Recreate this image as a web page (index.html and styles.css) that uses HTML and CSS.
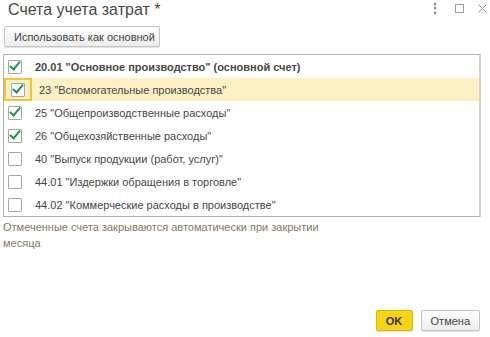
FILE: index.html
```html
<!DOCTYPE html>
<html lang="ru">
  <head>
    <meta charset="UTF-8" />
    <title>Счета учета затрат</title>
    <link rel="stylesheet" href="styles.css">
  </head>
  <body>
    <div class="window">
      <div class="header">
        <h1>Счета учета затрат *</h1>
        <div class="controls">
          <span class="more">&#8942;</span>
          <span class="maximize"></span>
          <svg class="close" width="9" height="9" viewBox="0 0 9 9"><path d="M0.5 0.5L8.5 8.5M8.5 0.5L0.5 8.5" stroke="#9a9a9a" stroke-width="1" fill="none"/></svg>
        </div>
      </div>

      <button class="btn">Использовать как основной</button>

      <div class="list">
        <div class="row">
          <span class="cb checked"></span>
          <span class="text bold">20.01 "Основное производство" (основной счет)</span>
        </div>
        <div class="row current">
          <span class="cb-focus"><span class="cb checked"></span></span>
          <span class="text">23 "Вспомогательные производства"</span>
        </div>
        <div class="row">
          <span class="cb checked"></span>
          <span class="text">25 "Общепроизводственные расходы"</span>
        </div>
        <div class="row">
          <span class="cb checked"></span>
          <span class="text">26 "Общехозяйственные расходы"</span>
        </div>
        <div class="row">
          <span class="cb"></span>
          <span class="text">40 "Выпуск продукции (работ, услуг)"</span>
        </div>
        <div class="row">
          <span class="cb"></span>
          <span class="text">44.01 "Издержки обращения в торговле"</span>
        </div>
        <div class="row">
          <span class="cb"></span>
          <span class="text">44.02 "Коммерческие расходы в производстве"</span>
        </div>
      </div>

      <p class="note">Отмеченные счета закрываются автоматически при закрытии месяца</p>

      <div class="footer">
        <button class="btn ok">OK</button>
        <button class="btn">Отмена</button>
      </div>
    </div>
  </body>
</html>
```

FILE: styles.css
```css
body {
  margin: 0;
  background-color: #fff;
  font-family: "Liberation Sans", Arial, sans-serif;
  color: #4d4d4d;
}
.window {
  width: 490px;
  height: 337px;
  box-sizing: border-box;
  padding: 0 10px 6px 3px;
  display: flex;
  flex-direction: column;
}
.header {
  display: flex;
  justify-content: space-between;
  align-items: flex-start;
  height: 26px;
}
h1 {
  margin: 0;
  padding: 1px 0 0 5px;
  font-size: 16px;
  font-weight: normal;
  color: #4a4a4a;
}
.controls {
  display: flex;
  align-items: center;
  gap: 14px;
  margin: 4px -7px 0 0;
}
.more {
  font-size: 12px;
  line-height: 9px;
  color: #777;
  font-weight: bold;
}
.maximize {
  width: 7px;
  height: 7px;
  border: 1px solid #9a9a9a;
}
.btn {
  font-family: "Liberation Sans", Arial, sans-serif;
  font-size: 11px;
  color: #444;
  height: 21px;
  padding: 0 9px;
  border: 1px solid #c4c4c4;
  border-radius: 2px;
  background: linear-gradient(#ffffff, #ececec);
  box-shadow: 0 1px 1px rgba(0, 0, 0, 0.12);
  white-space: nowrap;
  cursor: pointer;
}
.header + .btn {
  align-self: flex-start;
  margin-left: 1px;
  width: 156px;
}
.list {
  margin-top: 7px;
  border: 1px solid #b0b0b0;
  border-right: 2px solid #d2d2d2;
  width: 478px;
  box-sizing: border-box;
}
.row {
  display: flex;
  align-items: center;
  height: 23px;
  padding-left: 4px;
  font-size: 11px;
  color: #474747;
}
.row.current {
  background-color: #fdf0c4;
}
.cb-focus {
  display: flex;
  align-items: center;
  justify-content: center;
  width: 20px;
  height: 19px;
  margin-left: -4px;
  padding: 0 2px;
  border: 2px solid #f4c33a;
  box-sizing: content-box;
  margin-right: -2px;
}
.cb {
  position: relative;
  width: 12px;
  height: 12px;
  border: 1px solid #a6a6a6;
  border-radius: 1px;
  background: #fff;
}
.checked::after {
  content: "";
  position: absolute;
  left: 3px;
  top: -2px;
  width: 4px;
  height: 9px;
  border: solid #1b9a4a;
  border-width: 0 2px 2px 0;
  transform: rotate(40deg);
}
.text {
  margin-left: 13px;
}
.cb-focus + .text {
  margin-left: 9px;
}
.bold {
  font-weight: bold;
}
.note {
  margin: 2px 0 0 0;
  width: 320px;
  font-size: 11px;
  line-height: 16px;
  color: #857b5e;
}
.footer {
  margin-top: auto;
  display: flex;
  justify-content: flex-end;
  gap: 8px;
  margin-right: 0;
}
.footer .btn {
  height: 21px;
}
.btn.ok {
  width: 37px;
  padding: 0;
  font-weight: bold;
  background: #f7d417;
  border-color: #dcb500;
  color: #333;
}
```
